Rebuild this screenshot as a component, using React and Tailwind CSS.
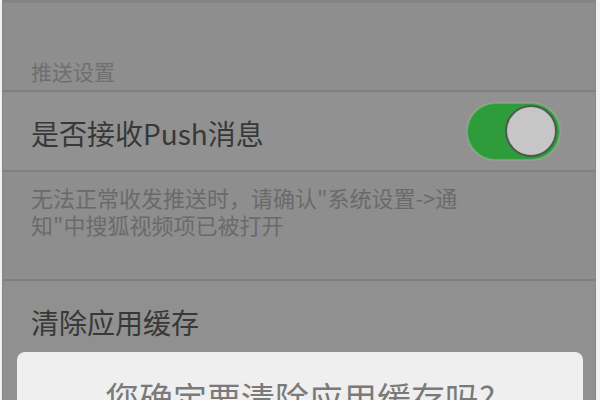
import React from 'react';

const font = { fontFamily: '"Noto Sans CJK SC", "Noto Sans", sans-serif' };

const Toggle = () => (
  <div className="w-[93px] h-[57px] rounded-full bg-[#2f9c3c] border border-[#5fae62] flex items-center justify-end p-[2px] shadow-[0_0_2px_#9bc99a]">
    <div className="w-[52px] h-[52px] rounded-full bg-[#c6c6c6] border-[2px] border-[#4d5a4f]" />
  </div>
);

const App = () => {
  return (
    <div className="w-[600px] h-[400px] overflow-hidden bg-[#f2f2f2] flex relative" style={font}>
      <div className="ml-[2px] mr-[4px] flex-1 flex flex-col bg-[#8e8e8e] border-t-[3px] border-[#848484] border-x border-x-[#868686]">
        <div className="h-[87px] flex items-end pl-[28px] pb-[4px]">
          <span className="text-[21px] leading-[30px] text-[#6f6f6f]">推送设置</span>
        </div>
        <div className="h-[2px] bg-[#7f7f7f]" />
        <div className="h-[78px] flex items-center justify-between pl-[28px] pr-[35px] bg-[#919191]">
          <span className="text-[28px] leading-[34px] text-[#383838] mt-[4px]">是否接收Push消息</span>
          <Toggle />
        </div>
        <div className="h-[2px] bg-[#808080]" />
        <div className="h-[107px] pl-[28px] pt-[12px]">
          <p className="text-[22px] leading-[27px] text-[#6a6a6a] w-[446px]">
            无法正常收发推送时，请确认"系统设置-&gt;通知"中搜狐视频项已被打开
          </p>
        </div>
        <div className="h-[2px] bg-[#7f7f7f]" />
        <div className="flex-1 bg-[#909090] pl-[28px] pt-[24px]">
          <span className="text-[28px] leading-[34px] text-[#383838]">清除应用缓存</span>
        </div>
      </div>
      <div className="absolute left-[17px] right-[17px] top-[352px] h-[80px] rounded-t-[8px] bg-[#efefef] flex justify-center pt-[29px]">
        <span className="text-[34px] leading-[34px] text-[#7a7a7a]">您确定要清除应用缓存吗?</span>
      </div>
    </div>
  );
};

export default App;
